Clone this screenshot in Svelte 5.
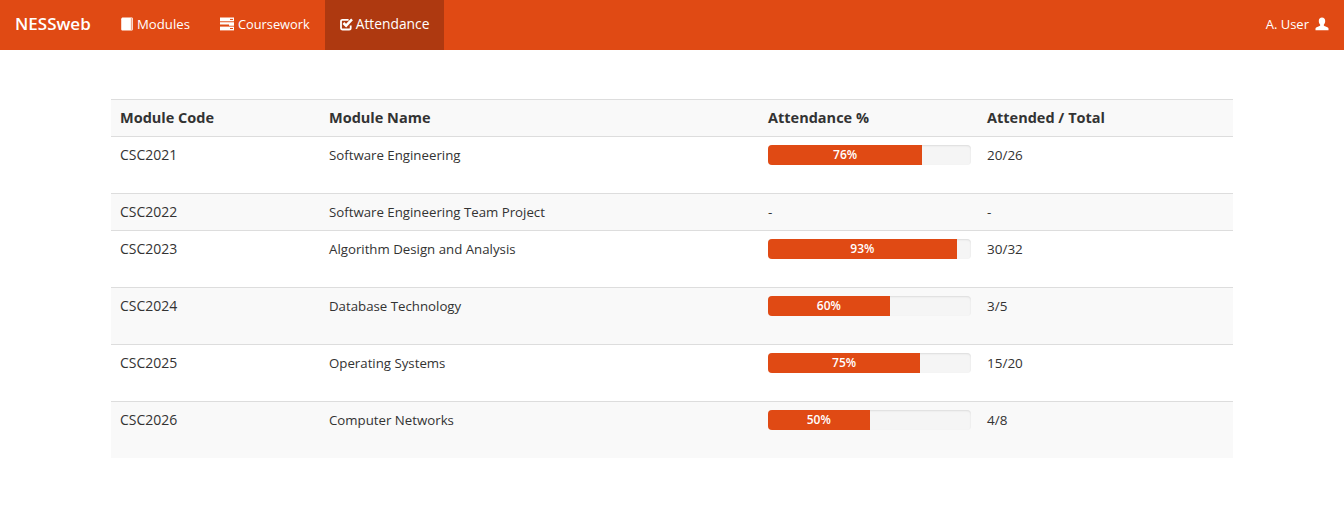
<script>
	const rows = [
		{ code: 'CSC2021', name: 'Software Engineering', pct: 76, count: '20/26' },
		{ code: 'CSC2022', name: 'Software Engineering Team Project', pct: null, count: '-' },
		{ code: 'CSC2023', name: 'Algorithm Design and Analysis', pct: 93, count: '30/32' },
		{ code: 'CSC2024', name: 'Database Technology', pct: 60, count: '3/5' },
		{ code: 'CSC2025', name: 'Operating Systems', pct: 75, count: '15/20' },
		{ code: 'CSC2026', name: 'Computer Networks', pct: 50, count: '4/8' }
	];
</script>

<nav class="navbar">
	<a class="brand" href="#top">NESSweb</a>
	<ul class="nav">
		<li>
			<a href="#modules">
				<svg class="icon" viewBox="0 0 14 15" aria-hidden="true">
					<path d="M2.8 0.5H12.2C12.8 0.5 13.2 0.8 13.2 1.4V13.2C13.2 14 12.6 14.5 11.8 14.5H2.4C1.4 14.5 0.8 13.9 0.8 13V2.5C0.8 1.2 1.5 0.5 2.8 0.5Z" fill="#fff" />
					<path d="M11.7 1.2V13.8" stroke="#e04a14" stroke-width="0.6" fill="none" />
				</svg>
				<span class="t-modules">Modules</span>
			</a>
		</li>
		<li>
			<a href="#coursework" class="coursework">
				<svg class="icon" viewBox="0 0 14 14" aria-hidden="true">
					<path d="M0 0.5H14V4.3H0Z" fill="#fff" />
					<path d="M0 5.3H14V8.7H9V7.4H0Z" fill="#fff" />
					<path d="M0 9.6H14V13.4H0Z" fill="#fff" />
					<path d="M10 11H13V12H10Z" fill="#e04a14" />
					<path d="M10 1.9H13V2.9H10Z" fill="#e04a14" />
				</svg>
				<span class="t-coursework">Coursework</span>
			</a>
		</li>
		<li class="active">
			<a href="#attendance">
				<svg class="icon check" viewBox="0 0 13 14" aria-hidden="true">
					<path d="M10.7 8.4V10.9C10.7 11.9 10.1 12.5 9.1 12.5H2.6C1.6 12.5 1 11.9 1 10.9V4.4C1 3.4 1.6 2.8 2.6 2.8H8.6" stroke="#fff" stroke-width="1.8" fill="none" />
					<path d="M3.4 6L6.1 8.7L12 2.4" stroke="#fff" stroke-width="2.5" fill="none" />
				</svg>
				<span>Attendance</span>
			</a>
		</li>
	</ul>
	<a class="user" href="#user">
		A. User
		<svg class="icon" viewBox="0 0 14 14" aria-hidden="true">
			<path d="M7 0.5C9 0.5 10.2 2 10.2 3.9C10.2 5.6 9.5 6.9 8.8 7.7C8.6 8.4 9 8.8 10 9.2C11.6 9.8 13.4 10.4 13.5 11.6V13.2H0.5V11.6C0.6 10.4 2.4 9.8 4 9.2C5 8.8 5.4 8.4 5.2 7.7C4.5 6.9 3.8 5.6 3.8 3.9C3.8 2 5 0.5 7 0.5Z" fill="#fff" />
		</svg>
	</a>
</nav>

<main class="container">
	<table>
		<thead>
			<tr>
				<th class="c-code">Module Code</th>
				<th class="c-name">Module Name</th>
				<th class="c-pct">Attendance %</th>
				<th>Attended / Total</th>
			</tr>
		</thead>
		<tbody>
			{#each rows as row}
				<tr>
					<td class="code">{row.code}</td>
					<td class="name">{row.name}</td>
					<td>
						{#if row.pct === null}
							-
						{:else}
							<div class="progress">
								<div class="progress-bar" style="width: {row.pct}%">{row.pct}%</div>
							</div>
						{/if}
					</td>
					<td>{row.count}</td>
				</tr>
			{/each}
		</tbody>
	</table>
</main>

<style>
	:global(body) {
		margin: 0;
		background: #fff;
		font-family: 'Open Sans', 'Noto Sans', sans-serif;
		font-size: 14px;
		line-height: 20px;
		color: #333;
	}

	a {
		color: inherit;
		text-decoration: none;
	}

	.navbar {
		display: flex;
		align-items: stretch;
		height: 50px;
		background: #e04a14;
		color: #fff;
	}

	.brand {
		padding: 14px 15px 16px;
		font-size: 17px;
		font-weight: 600;
		width: 75px;
		white-space: nowrap;
	}

	.nav {
		display: flex;
		list-style: none;
		margin: 0;
		padding: 0;
	}

	.nav a {
		display: flex;
		align-items: center;
		gap: 3px;
		height: 50px;
		box-sizing: border-box;
		padding: 0 15px 2px;
		white-space: nowrap;
		font-size: 13.8px;
	}

	.nav a.coursework {
		gap: 4px;
	}

	.t-modules {
		font-size: 13.2px;
	}

	.t-coursework {
		font-size: 12.8px;
	}

	.active a {
		background: #ae3910;
	}

	.icon {
		width: 14px;
		height: 14px;
		flex: none;
		margin-top: -1px;
	}

	.icon.check {
		width: 13px;
	}

	.user {
		display: flex;
		align-items: center;
		gap: 6px;
		margin-left: auto;
		padding: 0 15px 2px 0;
		font-size: 13px;
	}

	.container {
		padding: 49px 111px 0;
	}

	table {
		width: 100%;
		table-layout: fixed;
		border-collapse: collapse;
	}

	th,
	td {
		padding: 8px;
		text-align: left;
		vertical-align: top;
		border-top: 1px solid #ddd;
		font-size: 13.5px;
	}

	th:first-child,
	td:first-child {
		padding-left: 9px;
	}

	th {
		font-weight: 700;
		font-size: 14.5px;
		background: #f9f9f9;
		border-bottom: 1px solid #ddd;
	}

	.c-code {
		width: 193px;
	}

	.c-name {
		width: 423px;
	}

	.c-pct {
		width: 203px;
	}

	td.code {
		font-size: 14px;
	}

	td.name {
		font-size: 13.25px;
	}

	tbody tr:nth-child(even) td {
		background: #f9f9f9;
	}

	.progress {
		height: 20px;
		margin-bottom: 20px;
		background: #f5f5f5;
		border-radius: 4px;
		overflow: hidden;
		box-shadow: inset 0 1px 2px rgba(0, 0, 0, 0.1);
	}

	.progress-bar {
		height: 100%;
		background: #e04a14;
		color: #fff;
		font-size: 12px;
		font-weight: 600;
		line-height: 20px;
		text-align: center;
	}
</style>
